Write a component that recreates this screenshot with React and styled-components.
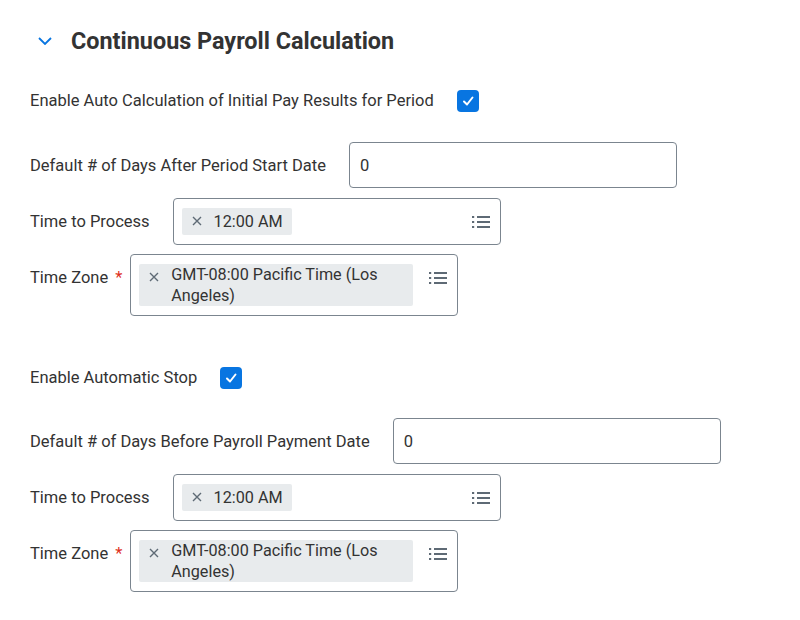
import React from 'react';
import styled, { createGlobalStyle } from 'styled-components';

const GlobalStyle = createGlobalStyle`
  body {
    margin: 0;
    background: #ffffff;
    font-family: Roboto, "Liberation Sans", sans-serif;
    color: #333333;
  }
`

const Page = styled.div`
  width: 800px;
  height: 620px;
  padding: 21px 0 0 30px;
  box-sizing: border-box;
  display: flex;
  flex-direction: column;
`

const Header = styled.div`
  display: flex;
  align-items: center;
  height: 40px;
  margin-left: 8px;
  gap: 19px;
`

const Title = styled.h2`
  margin: 0;
  font-size: 23.4px;
  font-weight: 700;
  color: #333333;
`

const CheckRow = styled.div`
  display: flex;
  align-items: center;
  gap: 23px;
  height: 22px;
  margin-top: ${props => props.$top}px;
`

const Label = styled.span`
  font-size: 16.5px;
  line-height: 20px;
  color: #333333;
  white-space: nowrap;
`

const Checkbox = styled.span`
  width: 22px;
  height: 22px;
  border-radius: 4px;
  background: #0875e1;
  display: flex;
  align-items: center;
  justify-content: center;
`

const FieldRow = styled.div`
  display: flex;
  align-items: flex-start;
  gap: ${props => (props.$tight ? 8 : 23)}px;
  margin-top: ${props => props.$top}px;
`

const FieldLabel = styled(Label)`
  padding-top: 14px;
`

const Required = styled.span`
  color: #de2e21;
  margin-left: 7px;
`

const TextInput = styled.div`
  width: 328px;
  height: 46px;
  box-sizing: border-box;
  border: 1px solid #7b858f;
  border-radius: 4px;
  padding: 0 10px;
  display: flex;
  align-items: center;
  font-size: 16.5px;
  color: #333333;
`

const SelectBox = styled.div`
  width: 328px;
  box-sizing: border-box;
  border: 1px solid #7b858f;
  border-radius: 4px;
  padding: 9px 9px 9px 8px;
  display: flex;
  align-items: flex-start;
  justify-content: space-between;
  gap: 15px;
`

const Pill = styled.div`
  display: flex;
  align-items: center;
  min-height: 27px;
  padding: 0 9px 0 10px;
  background: #e8ebed;
  border-radius: 2px;
  font-size: 16.2px;
  line-height: 21px;
  color: #333333;
  gap: 12px;
`

const Remove = styled.span`
  flex: none;
  width: 10px;
  align-self: flex-start;
  margin-top: 8px;
  display: flex;
`

const PromptIcon = styled.span`
  flex: none;
  width: 20px;
  margin-top: 6px;
  display: flex;
`

const Chevron = () => (
  <svg width="14" height="8" viewBox="0 0 14 8">
    <path d="M1 1 L7 7 L13 1" fill="none" stroke="#0875e1" strokeWidth="1.8" />
  </svg>
)

const Check = () => (
  <svg width="14" height="14" viewBox="0 0 14 14">
    <path d="M3 7.5 L6 10.5 L11.5 3.5" fill="none" stroke="#fff" strokeWidth="2" strokeLinecap="round" strokeLinejoin="round" />
  </svg>
)

const Cross = () => (
  <svg width="10" height="10" viewBox="0 0 10 10">
    <path d="M1 1 L9 9 M9 1 L1 9" stroke="#5e6a75" strokeWidth="1.4" />
  </svg>
)

const ListIcon = () => (
  <svg width="20" height="16" viewBox="0 0 20 16">
    <g fill="#5e6a75">
      <rect x="1" y="2" width="2.2" height="2" />
      <rect x="1" y="7" width="2.2" height="2" />
      <rect x="1" y="12" width="2.2" height="2" />
      <rect x="6" y="2" width="13" height="2" />
      <rect x="6" y="7" width="13" height="2" />
      <rect x="6" y="12" width="13" height="2" />
    </g>
  </svg>
)

const Select = ({ value }) => (
  <SelectBox>
    <Pill>
      <Remove><Cross /></Remove>
      <span>{value}</span>
    </Pill>
    <PromptIcon><ListIcon /></PromptIcon>
  </SelectBox>
)

const App = () => (
  <>
    <GlobalStyle />
    <Page>
      <Header>
        <Chevron />
        <Title>Continuous Payroll Calculation</Title>
      </Header>

      <CheckRow $top={29}>
        <Label>Enable Auto Calculation of Initial Pay Results for Period</Label>
        <Checkbox><Check /></Checkbox>
      </CheckRow>

      <FieldRow $top={30}>
        <FieldLabel>Default # of Days After Period Start Date</FieldLabel>
        <TextInput>0</TextInput>
      </FieldRow>
      <FieldRow $top={10}>
        <FieldLabel>Time to Process</FieldLabel>
        <Select value="12:00 AM" />
      </FieldRow>
      <FieldRow $top={9} $tight>
        <FieldLabel>Time Zone<Required>*</Required></FieldLabel>
        <Select value="GMT-08:00 Pacific Time (Los Angeles)" />
      </FieldRow>

      <CheckRow $top={51}>
        <Label>Enable Automatic Stop</Label>
        <Checkbox><Check /></Checkbox>
      </CheckRow>

      <FieldRow $top={29}>
        <FieldLabel>Default # of Days Before Payroll Payment Date</FieldLabel>
        <TextInput>0</TextInput>
      </FieldRow>
      <FieldRow $top={10}>
        <FieldLabel>Time to Process</FieldLabel>
        <Select value="12:00 AM" />
      </FieldRow>
      <FieldRow $top={9} $tight>
        <FieldLabel>Time Zone<Required>*</Required></FieldLabel>
        <Select value="GMT-08:00 Pacific Time (Los Angeles)" />
      </FieldRow>
    </Page>
  </>
)

export default App;
